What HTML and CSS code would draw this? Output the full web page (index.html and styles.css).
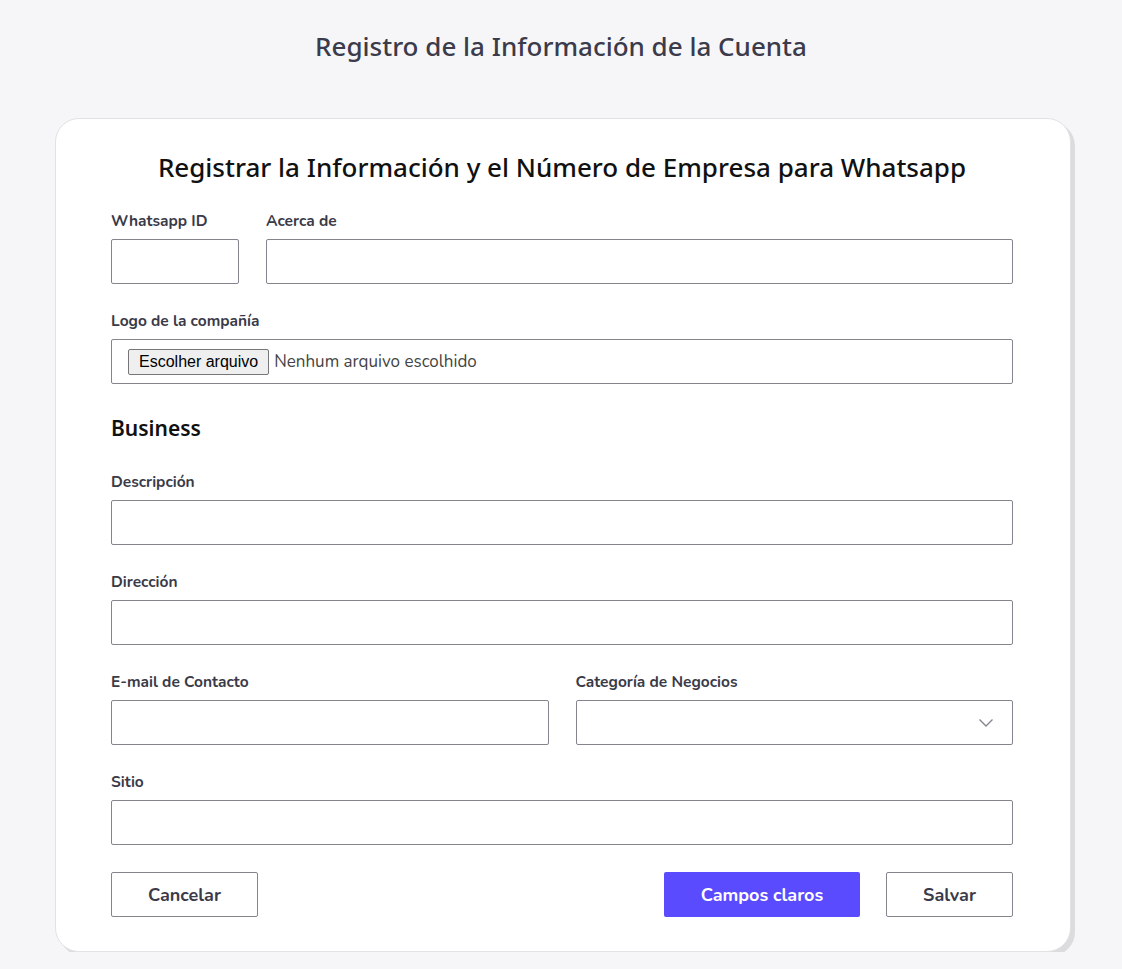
FILE: index.html
```html
<!DOCTYPE html>
<html lang="es">
<head>
<meta charset="utf-8">
<title>Registro de la Información de la Cuenta</title>
<link rel="stylesheet" href="styles.css">
</head>
<body>
<h1 class="page-title">Registro de la Información de la Cuenta</h1>
<main class="card">
  <h2 class="card-title">Registrar la Información y el Número de Empresa para Whatsapp</h2>
  <form class="form">
    <div class="row">
      <div class="field field-id">
        <label class="label">Whatsapp ID</label>
        <input class="input" type="text">
      </div>
      <div class="field field-grow">
        <label class="label">Acerca de</label>
        <input class="input" type="text">
      </div>
    </div>
    <div class="row">
      <div class="field field-grow">
        <label class="label">Logo de la compañía</label>
        <div class="input file-box">
          <button type="button" class="file-btn">Escolher arquivo</button>
          <span class="file-text">Nenhum arquivo escolhido</span>
        </div>
      </div>
    </div>
    <h3 class="section-title">Business</h3>
    <div class="row">
      <div class="field field-grow">
        <label class="label">Descripción</label>
        <input class="input" type="text">
      </div>
    </div>
    <div class="row">
      <div class="field field-grow">
        <label class="label">Dirección</label>
        <input class="input" type="text">
      </div>
    </div>
    <div class="row">
      <div class="field field-half">
        <label class="label">E-mail de Contacto</label>
        <input class="input" type="text">
      </div>
      <div class="field field-half">
        <label class="label">Categoría de Negocios</label>
        <div class="input select-box">
          <svg class="chevron" width="16" height="10" viewBox="0 0 16 10"><path d="M1.5 1.5 L8 8 L14.5 1.5" fill="none" stroke="#85858f" stroke-width="1.4"/></svg>
        </div>
      </div>
    </div>
    <div class="row">
      <div class="field field-grow">
        <label class="label">Sitio</label>
        <input class="input" type="text">
      </div>
    </div>
    <div class="actions">
      <button type="button" class="btn btn-outline btn-cancel">Cancelar</button>
      <div class="actions-right">
        <button type="button" class="btn btn-primary">Campos claros</button>
        <button type="button" class="btn btn-outline btn-save">Salvar</button>
      </div>
    </div>
  </form>
</main>
</body>
</html>
```
FILE: styles.css
```css
* { box-sizing: border-box; }

body {
  margin: 0;
  background: #f6f6f8;
  font-family: "Nunito", "Lato", "Noto Sans", sans-serif;
  color: #3a3a48;
}

.page-title {
  margin: 0;
  padding-top: 29px;
  height: 118px;
  text-align: center;
  font-family: "Noto Sans", "Open Sans", sans-serif;
  font-size: 26px;
  font-weight: 500;
  color: #3b3b4b;
  line-height: 34px;
}

.card {
  width: 1016px;
  margin: 0 51px 0 55px;
  background: #fff;
  border: 1px solid #e2e2e6;
  border-radius: 24px;
  box-shadow: 4px 4px 0 #dcdcdf;
  padding: 30px 57px 34px 55px;
}

.card-title {
  margin: 0 0 26px;
  text-align: center;
  font-family: "Noto Sans", "Open Sans", sans-serif;
  font-size: 26px;
  font-weight: 500;
  color: #111;
  line-height: 36px;
}

.form { display: flex; flex-direction: column; }

.row {
  display: flex;
  gap: 27px;
  margin-bottom: 27px;
}

.field { display: flex; flex-direction: column; }
.field-id { width: 128px; flex: none; }
.field-grow { flex: 1; }
.field-half { flex: 1; }

.label {
  font-size: 15.5px;
  font-weight: 700;
  color: #3a3a48;
  line-height: 20px;
  margin-bottom: 8px;
}

.input {
  height: 45px;
  width: 100%;
  border: 1px solid #85858f;
  border-radius: 2px;
  background: #fff;
  font: inherit;
}

.file-box {
  display: flex;
  align-items: center;
  padding-left: 16px;
  gap: 5px;
}

.file-btn {
  font-family: "Liberation Sans", Arial, sans-serif;
  font-size: 16px;
  color: #000;
  background: #efefef;
  border: 1px solid #767676;
  border-radius: 2px;
  height: 26px;
  padding: 0 10px;
}

.file-text {
  font-size: 17px;
  color: #444;
}

.section-title {
  margin: 2px 0 29px;
  font-family: "Noto Sans", "Open Sans", sans-serif;
  font-size: 21px;
  font-weight: 600;
  color: #111;
  line-height: 30px;
}

.select-box {
  display: flex;
  align-items: center;
  justify-content: flex-end;
  padding-right: 18px;
}

.actions {
  display: flex;
  justify-content: space-between;
  margin-top: 0;
}

.actions-right { display: flex; gap: 26px; }

.btn {
  height: 45px;
  font-family: inherit;
  font-size: 18px;
  font-weight: 700;
  border-radius: 2px;
  cursor: pointer;
}

.btn-outline {
  background: #fff;
  border: 1px solid #85858f;
  color: #3a3a48;
}

.btn-cancel { width: 147px; }
.btn-save { width: 127px; }

.btn-primary {
  width: 196px;
  background: #5b4bff;
  border: none;
  color: #fff;
}
```
